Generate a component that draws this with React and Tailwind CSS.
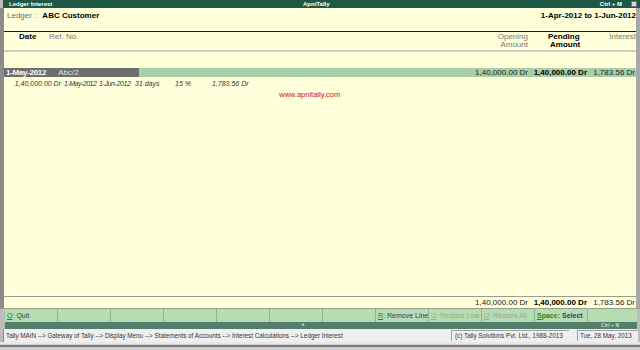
import React from "react";

const FONT = { fontFamily: '"Liberation Sans", Arial, sans-serif' };

const BUTTONS = [
    { key: "Q", label: "Quit" },
    {},
    {},
    {},
    {},
    {},
    {},
    { key: "R", label: "Remove Line" },
    { key: "U", label: "Restore Line", off: true },
    { key: "U", label: "Restore All", off: true },
    { key: "Space", label: "Select", bold: true },
    {},
];

function AmountCells({ opening, pending, interest }) {
    return (
        <div className="flex text-[8px] leading-[9px] text-[#222] whitespace-nowrap">
            <div className="w-[60px] text-right pr-[1px]">{opening}</div>
            <div className="w-[59px] text-right pr-[1px] font-bold text-black">{pending}</div>
            <div className="w-[48px] text-right pr-[1px]">{interest}</div>
        </div>
    );
}

function App() {
    return (
        <div
            className="w-[640px] h-[350px] flex flex-col bg-[#bdbdbd] overflow-hidden"
            style={FONT}
        >
            {/* title bar */}
            <div className="h-[8px] ml-[3px] bg-[#1d5845] flex items-center text-white text-[6px] font-bold leading-[8px]">
                <div className="w-[300px] pl-[6px]">Ledger Interest</div>
                <div className="flex-1">ApniTally</div>
                <div className="text-[6px] mr-[9px]">Ctrl + M</div>
                <div className="w-[6px] h-[6px] bg-[#d8d8d8] border border-[#777] mr-[3px]" />
            </div>

            {/* main cream panel */}
            <div className="flex-1 flex flex-col bg-[#ffffda] border-l-[4px] border-r-[4px] border-b border-l-[#8c8c8c] border-r-[#a8a8a8] border-b-[#9a9a90]">
                <div className="h-[23px] flex justify-between pt-[4px] pl-[3px] text-[8px] leading-[8px]">
                    <div>
                        <span className="text-[#666]">Ledger :</span>
                        <span className="font-bold ml-[6px]">ABC Customer</span>
                    </div>
                    <div className="font-bold">1-Apr-2012 to 1-Jun-2012</div>
                </div>
                <div className="h-[1px] bg-[#1a1a1a]" />

                {/* column header */}
                <div className="h-[18px] flex text-[8px] leading-[8px] pt-[1px] whitespace-nowrap">
                    <div className="w-[45px] pl-[15px] font-bold">Date</div>
                    <div className="flex-1 text-[#777]">Ref. No.</div>
                    <div className="w-[60px] text-right text-[#777] pr-[1px]">
                        Opening
                        <br />
                        Amount
                    </div>
                    <div className="w-[59px] font-bold pl-[19px]">
                        Pending
                        <br />
                        <span className="pl-[2px]">Amount</span>
                    </div>
                    <div className="w-[48px] text-right text-[#777]">Interest</div>
                </div>
                <div className="h-[2px] bg-[#cfcfc0]" />

                <div className="h-[16px]" />

                {/* selected row */}
                <div className="h-[9px] flex bg-[#a9cfa9]">
                    <div className="w-[135px] bg-[#6e6e6e] flex text-[8px] leading-[9px] whitespace-nowrap">
                        <span className="font-bold text-white pl-[2px] tracking-[-0.3px]">1-May-2012</span>
                        <span className="text-[#e2e2e2] ml-[12px]">Abc/2</span>
                    </div>
                    <div className="flex-1 flex justify-end">
                        <AmountCells opening="1,40,000.00 Dr" pending="1,40,000.00 Dr" interest="1,783.56 Dr" />
                    </div>
                </div>

                {/* detail row */}
                <div className="h-[9px] mt-[2px] flex italic text-[7px] leading-[9px] text-[#333] whitespace-nowrap">
                    <div className="w-[57px] text-right">1,40,000.00 Dr</div>
                    <div className="w-[38px] pl-[3px] tracking-[-0.5px]">1-May-2012</div>
                    <div className="w-[36px] tracking-[-0.4px]">1-Jun-2012</div>
                    <div className="w-[40px]">31 days</div>
                    <div className="w-[37px]">15 %</div>
                    <div>1,783.56 Dr</div>
                </div>

                <div className="mt-[3px] pl-[275px] text-[7.5px] leading-[8px] text-[#d0141b]">
                    www.apnitally.com
                </div>

                <div className="flex-1" />

                <div className="h-[1px] bg-[#9c9c90]" />
                <div className="h-[11px] flex justify-end pt-[1px]">
                    <AmountCells opening="1,40,000.00 Dr" pending="1,40,000.00 Dr" interest="1,783.56 Dr" />
                </div>
            </div>

            {/* button bar */}
            <div className="h-[13px] ml-[5px] mr-[3px] bg-[#b6dcb2] flex overflow-hidden">
                {BUTTONS.map((b, i) => (
                    <div
                        key={i}
                        className="w-[53px] shrink-0 border-r border-[#8fb58c] flex items-center pl-[2px] text-[7px] leading-[13px] whitespace-nowrap"
                    >
                        {b.key && (
                            <span
                                className={
                                    b.off
                                        ? "text-[#9aa89a]"
                                        : b.bold
                                        ? "text-[#1f8a2a] font-bold"
                                        : "text-[#1f8a2a]"
                                }
                            >
                                <span className="underline">{b.key.charAt(0)}</span>
                                {b.key.slice(1)}:
                            </span>
                        )}
                        {b.label && (
                            <span
                                className={
                                    b.off
                                        ? "ml-[2px] text-[#9aa89a]"
                                        : b.bold
                                        ? "ml-[2px] text-[#1d3f7a] font-bold"
                                        : "ml-[2px] text-[#1d3f7a]"
                                }
                            >
                                {b.label}
                            </span>
                        )}
                    </div>
                ))}
            </div>

            {/* lower dark bar */}
            <div className="h-[7px] ml-[5px] mr-[3px] bg-[#557f6d] flex items-center text-[5px] leading-[7px]">
                <div className="flex-1 text-center text-white font-bold">^</div>
                <div className="text-[#c9dccf] font-bold mr-[18px]">Ctrl + N</div>
            </div>

            {/* status bar */}
            <div className="h-[13px] ml-[3px] mr-[2px] bg-[#efefef] border-l border-[#8a8a8a] flex items-center text-[6.3px] leading-[13px] text-[#333] whitespace-nowrap">
                <div className="w-[447px] pl-[2px] overflow-hidden">
                    Tally MAIN --&gt; Gateway of Tally --&gt; Display Menu --&gt; Statements of Accounts --&gt; Interest Calculations --&gt; Ledger Interest
                </div>
                <div className="w-[118px] h-[11px] border-l border-t border-[#a0a0a0] pl-[3px] leading-[10px]">
                    (c) Tally Solutions Pvt. Ltd., 1988-2013
                </div>
                <div className="w-[8px]" />
                <div className="flex-1 h-[11px] border-l border-t border-[#a0a0a0] pl-[2px] leading-[10px]">
                    Tue, 28 May, 2013
                </div>
            </div>

            {/* bottom edge */}
            <div className="h-[8px] bg-[#d2d2d2] border-t-[2px] border-[#e8e8e8]">
                <div className="h-[2px] mt-[1px] bg-[#7a7a7a]" />
            </div>
        </div>
    );
}

export default App;
